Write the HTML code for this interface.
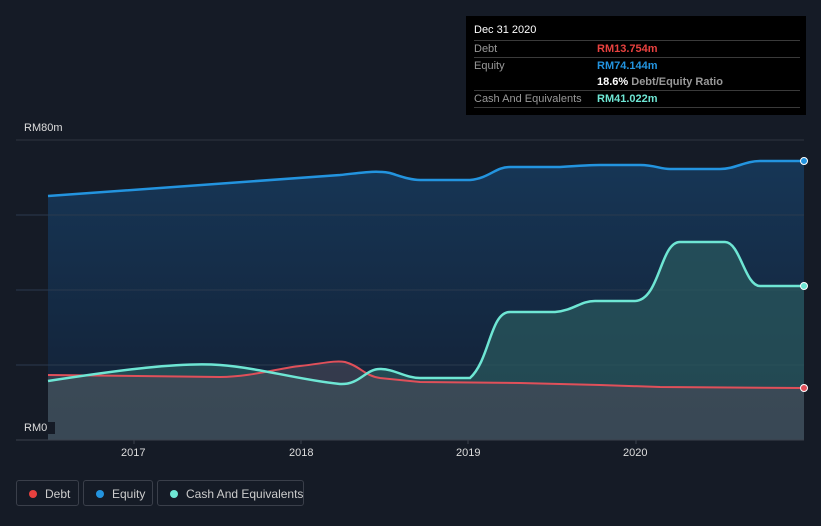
<!DOCTYPE html><html><head><style>
body{margin:0;width:821px;height:526px;background:#151b26;font-family:"Liberation Sans",sans-serif;overflow:hidden;position:relative}
.tt{position:absolute;left:466px;top:16px;width:340px;height:99px;background:#000;font-size:11px}
.r{position:absolute;left:8px;right:6px;border-top:1px solid #3a3a3a;height:16px;color:#999;line-height:16px}
.r span{position:absolute;left:123px;font-weight:bold}
.lg{position:absolute;top:480px;height:26px;border:1px solid #3a3f4a;border-radius:3px;color:#ccc;font-size:12px;line-height:26px;box-sizing:border-box;padding-left:28px;white-space:nowrap}
.lg i{position:absolute;left:12px;top:9px;width:8px;height:8px;border-radius:50%}
.ax{position:absolute;color:#ddd;font-size:11px}
</style></head><body>
<svg width="821" height="526" style="position:absolute;left:0;top:0">
<defs><linearGradient id="g" x1="0" y1="0" x2="0" y2="1"><stop offset="0" stop-color="#163656"/><stop offset="1" stop-color="#131f33"/></linearGradient></defs>
<line x1="16" y1="140" x2="804" y2="140" stroke="#2e3440"/>
<path d="M48,196 L340,175 C360,173 375,170 390,173 C400,176 410,180 420,180 L470,180 C490,178 495,167 510,167 L560,167 C575,166 590,165 600,165 L640,165 C655,165 660,169 670,169 L720,169 C735,169 745,161 760,161 L804,161 L804,440 L48,440Z" fill="url(#g)"/>
<g stroke="#2a3a4e"><line x1="16" y1="215" x2="804" y2="215"/><line x1="16" y1="290" x2="804" y2="290"/><line x1="16" y1="365" x2="804" y2="365"/></g>
<path d="M48,381 C120,370 180,362 220,365 C260,368 300,380 340,384 C360,385 365,369 380,369 C395,369 405,378 420,378 L470,378 C490,360 490,312 510,312 L555,312 C575,310 580,301 595,301 L635,301 C660,300 660,242 680,242 L725,242 C740,242 745,286 760,286 L804,286 L804,440 L48,440Z" fill="#2a5a5e" fill-opacity=".7"/>
<path d="M48,375 L220,377 C250,377 280,368 300,366 C320,364 335,360 345,362 C360,366 365,376 380,378 L420,382 L520,383 L600,385 L660,387 L804,388 L804,440 L48,440Z" fill="#4a4a58" fill-opacity=".6"/>
<path d="M48,196 L340,175 C360,173 375,170 390,173 C400,176 410,180 420,180 L470,180 C490,178 495,167 510,167 L560,167 C575,166 590,165 600,165 L640,165 C655,165 660,169 670,169 L720,169 C735,169 745,161 760,161 L804,161" fill="none" stroke="#2394df" stroke-width="2.5"/>
<path d="M48,375 L220,377 C250,377 280,368 300,366 C320,364 335,360 345,362 C360,366 365,376 380,378 L420,382 L520,383 L600,385 L660,387 L804,388" fill="none" stroke="#e0505a" stroke-width="2"/>
<path d="M48,381 C120,370 180,362 220,365 C260,368 300,380 340,384 C360,385 365,369 380,369 C395,369 405,378 420,378 L470,378 C490,360 490,312 510,312 L555,312 C575,310 580,301 595,301 L635,301 C660,300 660,242 680,242 L725,242 C740,242 745,286 760,286 L804,286" fill="none" stroke="#6ee6d4" stroke-width="2.5"/>
<circle cx="804" cy="161" r="3.5" fill="#2394df" stroke="#fff"/>
<circle cx="804" cy="286" r="3.5" fill="#6ee6d4" stroke="#fff"/>
<circle cx="804" cy="388" r="3.5" fill="#e0505a" stroke="#fff"/>
<line x1="16" y1="440" x2="804" y2="440" stroke="#3a404c"/>
<g stroke="#3a404c"><line x1="134" y1="440" x2="134" y2="444"/><line x1="301" y1="440" x2="301" y2="444"/><line x1="468" y1="440" x2="468" y2="444"/><line x1="636" y1="440" x2="636" y2="444"/></g>
</svg>
<div class="ax" style="left:24px;top:122px">RM80m</div>
<div class="ax" style="left:16px;top:422px;background:#151b26;padding:0 8px">RM0</div>
<div class="ax" style="left:121px;top:447px">2017</div>
<div class="ax" style="left:289px;top:447px">2018</div>
<div class="ax" style="left:456px;top:447px">2019</div>
<div class="ax" style="left:623px;top:447px">2020</div>
<div class="tt">
<div style="position:absolute;left:8px;top:8px;color:#fff">Dec 31 2020</div>
<div class="r" style="top:24px">Debt<span style="color:#e8413f">RM13.754m</span></div>
<div class="r" style="top:41px;height:33px">Equity<span style="color:#2394df">RM74.144m</span><span style="top:16px;color:#fff">18.6% <b style="color:#999">Debt/Equity Ratio</b></span></div>
<div class="r" style="top:74px;border-bottom:1px solid #3a3a3a">Cash And Equivalents<span style="color:#6ee6d4">RM41.022m</span></div>
</div>
<div class="lg" style="left:16px;width:63px"><i style="background:#e8413f"></i>Debt</div>
<div class="lg" style="left:83px;width:70px"><i style="background:#2394df"></i>Equity</div>
<div class="lg" style="left:157px;width:147px"><i style="background:#6ee6d4"></i>Cash And Equivalents</div>
</body></html>
